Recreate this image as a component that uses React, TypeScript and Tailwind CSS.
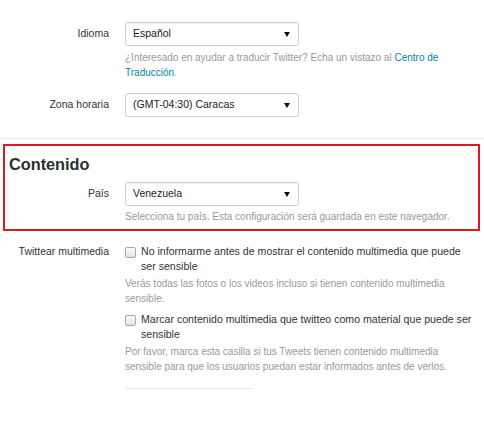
import React from 'react';

const font = { fontFamily: '"Liberation Sans", Arial, sans-serif' };

/* small black triangle used by the fake selects */
function Caret() {
  return (
    <svg width="6" height="5" viewBox="0 0 6 5" className="shrink-0">
      <path d="M0 0 L6 0 L3 5 Z" fill="#111" />
    </svg>
  );
}

function Select({ value }: { value: string }) {
  return (
    <div className="w-[174px] h-[24px] border border-[#ccc] rounded-[3px] bg-white flex items-center justify-between pl-[7px] pr-[8px] shadow-[inset_0_1px_1px_rgba(0,0,0,0.04)]">
      <span className="text-[10.5px] text-[#222]">{value}</span>
      <Caret />
    </div>
  );
}

function Checkbox() {
  return (
    <span className="mt-[3px] w-[11px] h-[11px] shrink-0 rounded-[2px] border border-[#a8a8a8] bg-gradient-to-b from-[#fdfdfd] to-[#e2e2e2]" />
  );
}

function Help({ children, className = '' }: { children: React.ReactNode; className?: string }) {
  return <p className={`text-[10px] leading-[14.5px] text-[#999] ${className}`}>{children}</p>;
}

export default function App() {
  return (
    <div className="w-[484px] h-[447px] bg-white overflow-hidden" style={font}>
      {/* Idioma */}
      <div className="pt-[22px] flex items-center">
        <label className="w-[125px] pr-[16px] text-right text-[10.5px] text-[#333]">Idioma</label>
        <Select value="Español" />
      </div>
      <Help className="ml-[125px] mt-[5px] w-[335px]">
        ¿Interesado en ayudar a traducir Twitter? Echa un vistazo al{' '}
        <a className="text-[#0084b4]">Centro de Traducción</a>.
      </Help>

      {/* Zona horaria */}
      <div className="mt-[13px] flex items-center">
        <label className="w-[125px] pr-[16px] text-right text-[10.5px] text-[#333]">Zona horaria</label>
        <Select value="(GMT-04:30) Caracas" />
      </div>

      <div className="mt-[21px] h-px bg-[#e8e8e8]" />

      {/* Contenido (highlighted) */}
      <div className="ml-[3px] mt-[5px] w-[477px] h-[87px] border-2 border-[#dc1a22]">
        <h2 className="pl-[4px] pt-[8px] text-[16.3px] leading-[20px] font-bold text-[#292f33]">Contenido</h2>
        <div className="mt-[8px] flex items-center">
          <label className="w-[120px] pr-[16px] text-right text-[10.5px] text-[#333]">País</label>
          <Select value="Venezuela" />
        </div>
        <Help className="ml-[120px] mt-[4px]">
          Selecciona tu país. Esta configuración será guardada en este navegador.
        </Help>
      </div>

      {/* Twittear multimedia */}
      <div className="mt-[13px] flex">
        <label className="w-[125px] pr-[16px] text-right text-[10.5px] leading-[15px] text-[#333]">Twittear multimedia</label>
        <div className="w-[359px]">
          <div className="flex gap-[5px]">
            <Checkbox />
            <span className="text-[10.6px] leading-[15px] text-[#333] whitespace-nowrap">
              No informarme antes de mostrar el contenido multimedia que puede
              <br />
              ser sensible
            </span>
          </div>
          <Help className="mt-[3px] w-[330px]">
            Verás todas las fotos o los videos incluso si tienen contenido multimedia sensible.
          </Help>
          <div className="mt-[6px] flex gap-[5px]">
            <Checkbox />
            <span className="text-[10.6px] leading-[15px] text-[#333] whitespace-nowrap">
              Marcar contenido multimedia que twitteo como material que puede ser
              <br />
              sensible
            </span>
          </div>
          <Help className="mt-[3px] w-[340px]">
            Por favor, marca esta casilla si tus Tweets tienen contenido multimedia sensible para que los usuarios puedan estar informados antes de verlos.
          </Help>
          <div className="mt-[14px] w-[128px] h-px bg-[#e8e8e8]" />
        </div>
      </div>
    </div>
  );
}
